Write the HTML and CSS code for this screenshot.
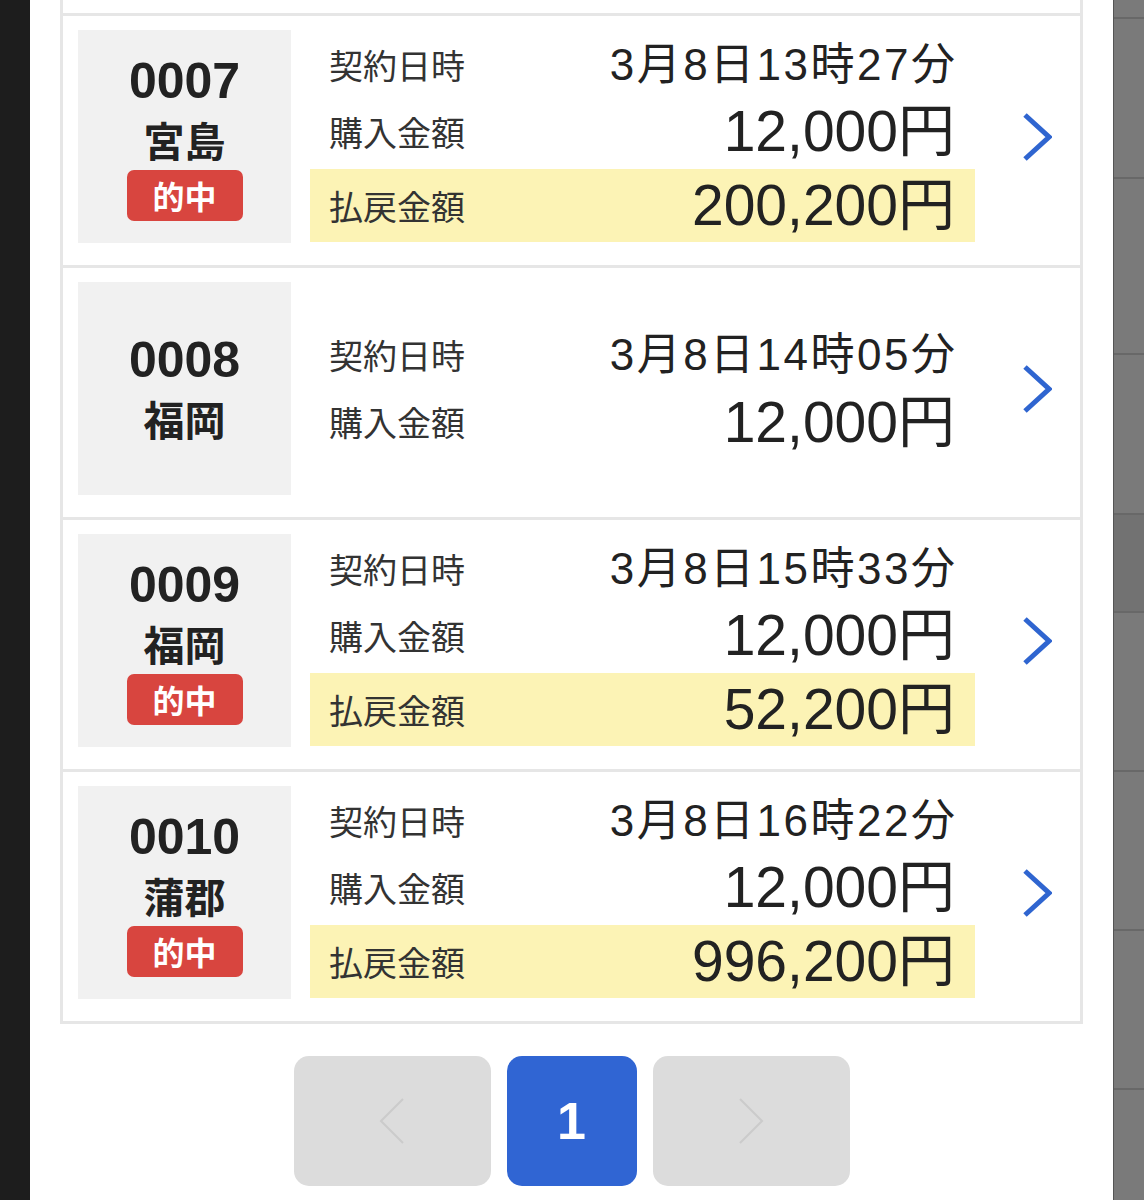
FILE: index.html
```html
<!DOCTYPE html>
<html lang="ja">
  <head>
    <meta charset="UTF-8" />
    <meta name="viewport" content="width=device-width, initial-scale=1.0" />
    <title>購入履歴</title>
    <link rel="stylesheet" href="styles.css">
  </head>
  <body>
    <div class="screen">
      <div class="side-left"></div>

      <main class="panel">
        <div class="list">
          <!-- bottom edge of the previous card -->
          <div class="card-tail"></div>

          <div class="card">
            <div class="race">
              <div class="race-no">0007</div>
              <div class="race-place">宮島</div>
              <span class="hit">的中</span>
            </div>
            <div class="info">
              <div class="row"><span class="label">契約日時</span><span class="value date">3月8日13時27分</span></div>
              <div class="row"><span class="label">購入金額</span><span class="value amount">12,000円</span></div>
              <div class="row payout"><span class="label">払戻金額</span><span class="value amount">200,200円</span></div>
            </div>
            <div class="arrow">
              <svg width="30" height="50" viewBox="0 0 30 50"><polyline points="3,3 27,25 3,47" /></svg>
            </div>
          </div>

          <div class="card">
            <div class="race">
              <div class="race-no">0008</div>
              <div class="race-place">福岡</div>
            </div>
            <div class="info">
              <div class="row"><span class="label">契約日時</span><span class="value date">3月8日14時05分</span></div>
              <div class="row"><span class="label">購入金額</span><span class="value amount">12,000円</span></div>
            </div>
            <div class="arrow">
              <svg width="30" height="50" viewBox="0 0 30 50"><polyline points="3,3 27,25 3,47" /></svg>
            </div>
          </div>

          <div class="card">
            <div class="race">
              <div class="race-no">0009</div>
              <div class="race-place">福岡</div>
              <span class="hit">的中</span>
            </div>
            <div class="info">
              <div class="row"><span class="label">契約日時</span><span class="value date">3月8日15時33分</span></div>
              <div class="row"><span class="label">購入金額</span><span class="value amount">12,000円</span></div>
              <div class="row payout"><span class="label">払戻金額</span><span class="value amount">52,200円</span></div>
            </div>
            <div class="arrow">
              <svg width="30" height="50" viewBox="0 0 30 50"><polyline points="3,3 27,25 3,47" /></svg>
            </div>
          </div>

          <div class="card">
            <div class="race">
              <div class="race-no">0010</div>
              <div class="race-place">蒲郡</div>
              <span class="hit">的中</span>
            </div>
            <div class="info">
              <div class="row"><span class="label">契約日時</span><span class="value date">3月8日16時22分</span></div>
              <div class="row"><span class="label">購入金額</span><span class="value amount">12,000円</span></div>
              <div class="row payout"><span class="label">払戻金額</span><span class="value amount">996,200円</span></div>
            </div>
            <div class="arrow">
              <svg width="30" height="50" viewBox="0 0 30 50"><polyline points="3,3 27,25 3,47" /></svg>
            </div>
          </div>
        </div>

        <nav class="pager">
          <button class="page-btn step" type="button" disabled>
            <svg width="26" height="46" viewBox="0 0 26 46"><polyline points="24,1 2,23 24,45" /></svg>
          </button>
          <button class="page-btn current" type="button">1</button>
          <button class="page-btn step" type="button" disabled>
            <svg width="26" height="46" viewBox="0 0 26 46"><polyline points="2,1 24,23 2,45" /></svg>
          </button>
        </nav>
      </main>

      <div class="side-right">
        <div class="strip" style="height: 17px"></div>
        <div class="strip" style="height: 160px"></div>
        <div class="strip" style="height: 176px"></div>
        <div class="strip" style="height: 160px"></div>
        <div class="strip dark" style="height: 98px"></div>
        <div class="strip" style="height: 159px"></div>
        <div class="strip" style="height: 159px"></div>
        <div class="strip" style="height: 159px"></div>
        <div class="strip" style="height: 112px"></div>
      </div>
    </div>
  </body>
</html>
```

FILE: styles.css
```css
body {
  margin: 0;
  padding: 0;
  height: 1200px;
  overflow: hidden;
  font-family: "Liberation Sans", "Noto Sans CJK JP", sans-serif;
  color: #222;
  background-color: #fff;
}
.screen {
  display: flex;
  height: 1200px;
}
.side-left {
  width: 30px;
  flex-shrink: 0;
  background-color: #1d1d1d;
}
.panel {
  width: 1083px;
  flex-shrink: 0;
  padding: 0 30px;
  box-sizing: border-box;
  background-color: #fff;
}
.side-right {
  flex: 1;
  border-left: 1px solid #555;
  background-color: #7a7a7a;
  overflow: hidden;
}
.strip {
  border-top: 2px solid #686868;
  box-sizing: border-box;
}
.strip:first-child {
  border-top: none;
}
.strip.dark {
  background-color: #727272;
}

/* card list */
.list {
  width: 1023px;
}
.card-tail {
  height: 13px;
  border: 3px solid #e6e6e6;
  border-top: none;
}
.card {
  display: flex;
  align-items: center;
  padding: 14px 0 22px 15px;
  border: 3px solid #e6e6e6;
  border-top: none;
}
.race {
  width: 213px;
  height: 213px;
  flex-shrink: 0;
  display: flex;
  flex-direction: column;
  align-items: center;
  justify-content: center;
  background-color: #f1f1f1;
  font-weight: bold;
  color: #222;
}
.race-no {
  font-size: 50px;
  line-height: 58px;
}
.race-place {
  font-family: "Noto Sans CJK JP", sans-serif;
  font-size: 41px;
  line-height: 58px;
}
.hit {
  margin-top: 2px;
  width: 116px;
  height: 51px;
  border-radius: 7px;
  background-color: #d8453f;
  color: #fff;
  font-family: "Noto Sans CJK JP", sans-serif;
  font-size: 32px;
  line-height: 50px;
  text-align: center;
}
.info {
  width: 665px;
  margin-left: 19px;
  flex-shrink: 0;
  display: flex;
  flex-direction: column;
}
.row {
  height: 67px;
  display: flex;
  align-items: center;
  justify-content: space-between;
  padding: 0 20px 0 19px;
}
.row.payout {
  height: 73px;
  margin-top: 4px;
  background-color: #fcf3b5;
}
.label {
  font-family: "Noto Sans CJK JP", sans-serif;
  font-size: 34px;
  line-height: 1;
  color: #333;
}
.value {
  white-space: nowrap;
  line-height: 1;
}
.date {
  font-size: 44px;
  letter-spacing: 2.5px;
  margin-right: -2.5px;
}
.amount {
  font-size: 57px;
}
.arrow {
  flex: 1;
  padding-left: 47px;
  display: flex;
  align-items: center;
}
.arrow svg polyline {
  fill: none;
  stroke: #2f65d0;
  stroke-width: 5;
}

/* pagination */
.pager {
  display: flex;
  justify-content: center;
  gap: 16px;
  margin-top: 32px;
}
.page-btn {
  height: 130px;
  border: none;
  border-radius: 15px;
  padding: 0;
  display: flex;
  align-items: center;
  justify-content: center;
  font-family: "Liberation Sans", sans-serif;
}
.page-btn.step {
  width: 197px;
  background-color: #dcdcdc;
}
.page-btn.step polyline {
  fill: none;
  stroke: #cbcbcb;
  stroke-width: 2;
}
.page-btn.current {
  width: 130px;
  background-color: #3065d3;
  color: #fff;
  font-size: 52px;
  font-weight: bold;
}
```
